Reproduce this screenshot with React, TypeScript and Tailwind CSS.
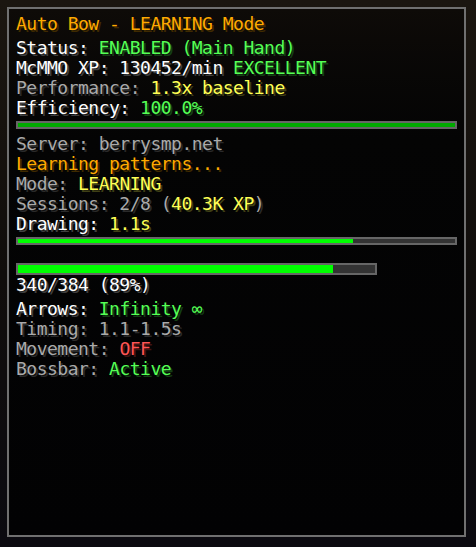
import React from 'react';

// Minecraft chat colours, each with its quarter-brightness drop shadow
const white = 'text-[#ffffff] [text-shadow:2px_2px_0_#3f3f3f]';
const gray = 'text-[#aaaaaa] [text-shadow:2px_2px_0_#2a2a2a]';
const gold = 'text-[#ffaa00] [text-shadow:2px_2px_0_#3f2a00]';
const green = 'text-[#55ff55] [text-shadow:2px_2px_0_#153f15]';
const yellow = 'text-[#ffff55] [text-shadow:2px_2px_0_#3f3f15]';
const red = 'text-[#ff5555] [text-shadow:2px_2px_0_#3f1515]';

function Line({ children, className = '' }: { children: React.ReactNode; className?: string }) {
  return <div className={`h-5 leading-5 whitespace-pre ${className}`}>{children}</div>;
}

function Bar({ width, height, fill, color }: { width: string; height: string; fill: number; color: string }) {
  return (
    <div className={`${width} ${height} bg-[#333333] border-2 border-[#666666] flex`}>
      <div className={`${color} h-full`} style={{ width: `${fill}%` }} />
    </div>
  );
}

export default function App() {
  return (
    <div className="w-[476px] h-[547px] bg-gradient-to-b from-[#1b1610] via-[#100d0b] to-[#0b0a10] p-[7px] pr-[10px] pb-[10px]">
      <div
        className="w-[459px] h-[530px] border-2 border-[#707070] bg-gradient-to-b from-[#0e0b08] via-[#040404] via-25% to-[#020203] pl-[7px] pt-[5px] text-[18px] tracking-[-0.5px]"
        style={{ fontFamily: '"DejaVu Sans Mono", "Liberation Mono", monospace' }}
      >
        <Line className={`${gold} mb-1`}>Auto Bow - LEARNING Mode</Line>
        <Line>
          <span className={white}>Status: </span>
          <span className={green}>ENABLED (Main Hand)</span>
        </Line>
        <Line>
          <span className={white}>McMMO XP: 130452/min </span>
          <span className={green}>EXCELLENT</span>
        </Line>
        <Line>
          <span className={gray}>Performance: </span>
          <span className={yellow}>1.3x baseline</span>
        </Line>
        <Line>
          <span className={white}>Efficiency: </span>
          <span className={green}>100.0%</span>
        </Line>
        <div className="mt-[3px] mb-[5px]">
          <Bar width="w-[441px]" height="h-[8px]" fill={100} color="bg-[#00aa00]" />
        </div>
        <Line className={gray}>Server: berrysmp.net</Line>
        <Line className={gold}>Learning patterns...</Line>
        <Line>
          <span className={gray}>Mode: </span>
          <span className={yellow}>LEARNING</span>
        </Line>
        <Line>
          <span className={gray}>Sessions: 2/8 (</span>
          <span className={yellow}>40.3K XP</span>
          <span className={gray}>)</span>
        </Line>
        <Line>
          <span className={white}>Drawing: </span>
          <span className={yellow}>1.1s</span>
        </Line>
        <div className="mt-[3px]">
          <Bar width="w-[441px]" height="h-[8px]" fill={76.7} color="bg-[#00ff00]" />
        </div>
        <div className="mt-[18px]">
          <Bar width="w-[361px]" height="h-[12px]" fill={88.2} color="bg-[#00ff00]" />
        </div>
        <Line className={`${white} mb-1`}>340/384 (89%)</Line>
        <Line>
          <span className={white}>Arrows: </span>
          <span className={green}>Infinity ∞</span>
        </Line>
        <Line className={gray}>Timing: 1.1-1.5s</Line>
        <Line>
          <span className={gray}>Movement: </span>
          <span className={red}>OFF</span>
        </Line>
        <Line>
          <span className={gray}>Bossbar: </span>
          <span className={green}>Active</span>
        </Line>
      </div>
    </div>
  );
}
